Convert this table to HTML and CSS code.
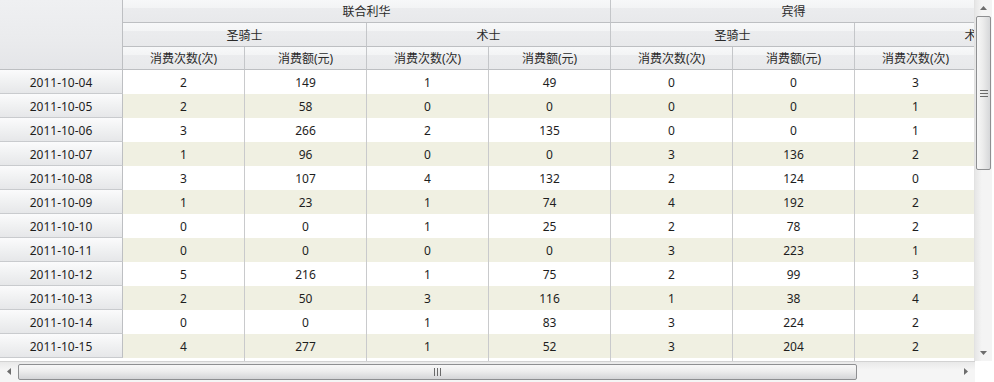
FILE: index.html
```html
<!DOCTYPE html>
<html>
<head>
<meta charset="utf-8">
<link rel="stylesheet" href="styles.css">
</head>
<body>
<div class="grid">
  <div class="top">
    <div class="viewport">
      <div class="rowhead-col">
        <div class="corner"></div>
        <div class="rh">2011-10-04</div>
        <div class="rh">2011-10-05</div>
        <div class="rh">2011-10-06</div>
        <div class="rh">2011-10-07</div>
        <div class="rh">2011-10-08</div>
        <div class="rh">2011-10-09</div>
        <div class="rh">2011-10-10</div>
        <div class="rh">2011-10-11</div>
        <div class="rh">2011-10-12</div>
        <div class="rh">2011-10-13</div>
        <div class="rh">2011-10-14</div>
        <div class="rh">2011-10-15</div>
      </div>
      <div class="content">
        <div class="hrow h1">
          <div class="hc w4">联合利华</div>
          <div class="hc wvis">宾得</div>
        </div>
        <div class="hrow h2">
          <div class="hc w2">圣骑士</div>
          <div class="hc w2">术士</div>
          <div class="hc w2">圣骑士</div>
          <div class="hc w2">术士</div>
        </div>
        <div class="hrow h3">
          <div class="hc w1">消费次数(次)</div>
          <div class="hc w1">消费额(元)</div>
          <div class="hc w1">消费次数(次)</div>
          <div class="hc w1">消费额(元)</div>
          <div class="hc w1">消费次数(次)</div>
          <div class="hc w1">消费额(元)</div>
          <div class="hc w1">消费次数(次)</div>
        </div>
        <div class="body">
          <div class="row"><div class="c">2</div><div class="c">149</div><div class="c">1</div><div class="c">49</div><div class="c">0</div><div class="c">0</div><div class="c">3</div></div>
          <div class="row alt"><div class="c">2</div><div class="c">58</div><div class="c">0</div><div class="c">0</div><div class="c">0</div><div class="c">0</div><div class="c">1</div></div>
          <div class="row"><div class="c">3</div><div class="c">266</div><div class="c">2</div><div class="c">135</div><div class="c">0</div><div class="c">0</div><div class="c">1</div></div>
          <div class="row alt"><div class="c">1</div><div class="c">96</div><div class="c">0</div><div class="c">0</div><div class="c">3</div><div class="c">136</div><div class="c">2</div></div>
          <div class="row"><div class="c">3</div><div class="c">107</div><div class="c">4</div><div class="c">132</div><div class="c">2</div><div class="c">124</div><div class="c">0</div></div>
          <div class="row alt"><div class="c">1</div><div class="c">23</div><div class="c">1</div><div class="c">74</div><div class="c">4</div><div class="c">192</div><div class="c">2</div></div>
          <div class="row"><div class="c">0</div><div class="c">0</div><div class="c">1</div><div class="c">25</div><div class="c">2</div><div class="c">78</div><div class="c">2</div></div>
          <div class="row alt"><div class="c">0</div><div class="c">0</div><div class="c">0</div><div class="c">0</div><div class="c">3</div><div class="c">223</div><div class="c">1</div></div>
          <div class="row"><div class="c">5</div><div class="c">216</div><div class="c">1</div><div class="c">75</div><div class="c">2</div><div class="c">99</div><div class="c">3</div></div>
          <div class="row alt"><div class="c">2</div><div class="c">50</div><div class="c">3</div><div class="c">116</div><div class="c">1</div><div class="c">38</div><div class="c">4</div></div>
          <div class="row"><div class="c">0</div><div class="c">0</div><div class="c">1</div><div class="c">83</div><div class="c">3</div><div class="c">224</div><div class="c">2</div></div>
          <div class="row alt"><div class="c">4</div><div class="c">277</div><div class="c">1</div><div class="c">52</div><div class="c">3</div><div class="c">204</div><div class="c">2</div></div>
        </div>
      </div>
    </div>
    <div class="vscroll">
      <div class="arrow">
        <svg width="7" height="4" viewBox="0 0 7 4"><path d="M0 4 L3.5 0 L7 4 Z" fill="#6d6d6d"/></svg>
      </div>
      <div class="vthumb">
        <svg width="8" height="7" viewBox="0 0 8 7"><path d="M0 0.5H8M0 3.5H8M0 6.5H8" stroke="#6a6a6a" stroke-width="1"/></svg>
      </div>
      <div class="vtrack"></div>
      <div class="arrow">
        <svg width="7" height="4" viewBox="0 0 7 4"><path d="M0 0 L3.5 4 L7 0 Z" fill="#6d6d6d"/></svg>
      </div>
    </div>
  </div>
  <div class="bottom">
    <div class="hscroll">
      <div class="harrow">
        <svg width="4" height="7" viewBox="0 0 4 7"><path d="M4 0 L0 3.5 L4 7 Z" fill="#6d6d6d"/></svg>
      </div>
      <div class="hthumb">
        <svg width="7" height="8" viewBox="0 0 7 8"><path d="M0.5 0V8M3.5 0V8M6.5 0V8" stroke="#6a6a6a" stroke-width="1"/></svg>
      </div>
      <div class="htrack"></div>
      <div class="harrow">
        <svg width="4" height="7" viewBox="0 0 4 7"><path d="M0 0 L4 3.5 L0 7 Z" fill="#6d6d6d"/></svg>
      </div>
    </div>
    <div class="sq"></div>
  </div>
</div>
</body>
</html>
```
FILE: styles.css
```css
html, body {
  margin: 0;
  padding: 0;
  background: #ffffff;
}
body {
  width: 994px;
  height: 382px;
  overflow: hidden;
  font-family: "Noto Sans", "Noto Sans CJK SC", sans-serif;
  font-size: 12px;
  color: #1e1e1e;
}
.grid {
  display: flex;
  flex-direction: column;
  width: 994px;
  height: 382px;
}
.top {
  display: flex;
  height: 361px;
}
.viewport {
  width: 975px;
  height: 361px;
  overflow: hidden;
  display: flex;
}
.rowhead-col {
  width: 123px;
  flex: none;
  display: flex;
  flex-direction: column;
}
.corner {
  height: 70px;
  box-sizing: border-box;
  border-right: 1px solid #bdbfc2;
  border-bottom: 1px solid #bdbfc2;
  background: linear-gradient(#eff0f2 0%, #eaebed 60%, #e4e5e8 100%);
}
.rh {
  height: 24px;
  box-sizing: border-box;
  border-right: 1px solid #bdbfc2;
  border-bottom: 1px solid #c9cbce;
  background: linear-gradient(#fbfbfc 0%, #f1f2f3 45%, #e6e7e9 100%);
  display: flex;
  align-items: center;
  justify-content: center;
  padding-top: 1px;
}
.content {
  flex: none;
  width: 854px;
  display: flex;
  flex-direction: column;
}
.hrow {
  display: flex;
  flex: none;
}
.h1 { height: 23px; }
.h2 { height: 24px; }
.h3 { height: 23px; }
.hc {
  flex: none;
  box-sizing: border-box;
  border-right: 1px solid #c4c6c9;
  border-bottom: 1px solid #bdbfc2;
  background: linear-gradient(#f7f8f9 0%, #f3f4f5 35%, #ebecee 36%, #e8e9eb 100%);
  display: flex;
  align-items: center;
  justify-content: center;
  white-space: nowrap;
  color: #2a2a2a;
}
.w1 { width: 122px; }
.w2 { width: 244px; }
.w4 { width: 488px; }
.wvis { width: 366px; }
.body {
  flex: 1;
  display: flex;
  flex-direction: column;
  background: repeating-linear-gradient(to right, #ffffff 0 121px, #c9cacc 121px 122px);
}
.row {
  display: flex;
  height: 24px;
  flex: none;
  background: #ffffff;
}
.row.alt {
  background: #f0f0e2;
}
.c {
  width: 122px;
  flex: none;
  box-sizing: border-box;
  border-right: 1px solid #c9cacc;
  display: flex;
  align-items: center;
  justify-content: center;
  padding-top: 1px;
}
.vscroll {
  width: 17px;
  margin-right: 2px;
  display: flex;
  flex-direction: column;
  align-items: center;
  background: linear-gradient(to right, #e6e6e6, #f4f4f4 40%, #f4f4f4);
  border-left: 1px solid #e2e2e2;
}
.arrow {
  height: 16px;
  width: 16px;
  display: flex;
  align-items: center;
  justify-content: center;
  flex: none;
}
.vthumb {
  width: 15px;
  height: 154px;
  box-sizing: border-box;
  border: 1px solid #8e8f91;
  border-radius: 2px;
  background: linear-gradient(to right, #f7f7f7 0%, #ececec 45%, #d6d7d9 100%);
  display: flex;
  align-items: center;
  justify-content: center;
  flex: none;
}
.vtrack { flex: 1; }
.bottom {
  display: flex;
  height: 21px;
}
.hscroll {
  width: 975px;
  display: flex;
  align-items: center;
  box-sizing: border-box;
  border-top: 1px solid #d2d2d2;
  background: linear-gradient(#e9e9e9, #f5f5f5 40%, #f5f5f5);
  padding-bottom: 1px;
}
.harrow {
  width: 18px;
  height: 16px;
  flex: none;
  display: flex;
  align-items: center;
  justify-content: center;
}
.hthumb {
  width: 839px;
  height: 16px;
  box-sizing: border-box;
  border: 1px solid #8e8f91;
  border-radius: 2px;
  background: linear-gradient(#f8f8f8 0%, #ededed 45%, #d4d5d7 100%);
  display: flex;
  align-items: center;
  justify-content: center;
  flex: none;
}
.htrack { flex: 1; }
.sq {
  width: 19px;
  background: #ffffff;
}
```
